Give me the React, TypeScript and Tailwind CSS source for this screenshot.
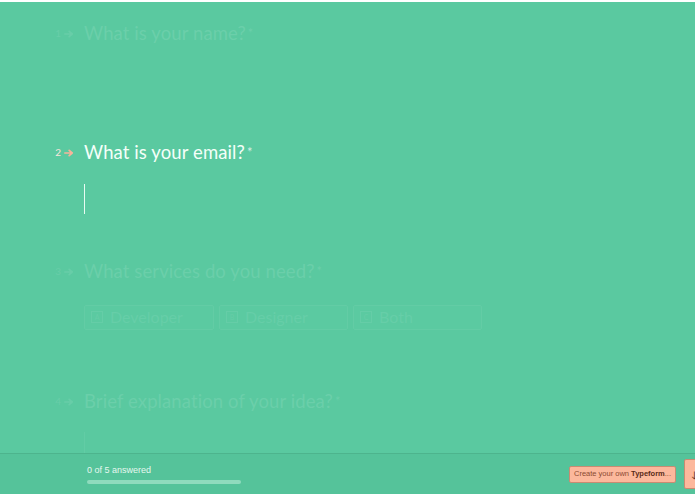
import React from 'react';

const font = { fontFamily: 'Lato, "Noto Sans", sans-serif' };

interface QuestionProps {
  num: number;
  title: string;
  active?: boolean;
  children?: React.ReactNode;
  className?: string;
}

const Question = ({ num, title, active, children, className }: QuestionProps) => (
  <div className={className}>
    <div className="flex items-center">
      <div className="flex items-center w-[84px] justify-end pr-[10px] gap-[3px]">
        <span className={`text-[10px] ${active ? 'text-[#fbe6dc]' : 'text-[#68cda8]'}`}>{num}</span>
        <svg width="10" height="8" viewBox="0 0 10 8" className="mt-[1px]">
          <path
            d="M0.8 4h7M5.2 1.4L8.2 4 5.2 6.6"
            fill="none"
            stroke={active ? '#f8b49a' : '#68cda8'}
            strokeWidth="1.7"
            strokeLinecap="round"
            strokeLinejoin="round"
          />
        </svg>
      </div>
      <h2
        className={`text-[18.5px] tracking-[0.1px] leading-none ${active ? 'text-[#f4fff9]' : 'text-[#6bcfaa]'}`}
      >
        {title}
        <sup className={`text-[13px] ml-[2px] relative top-[-2px] ${active ? 'text-[#d7efe5]' : ''}`}>*</sup>
      </h2>
    </div>
    {children}
  </div>
);

const Choice = ({ letter, label, width }: { letter: string; label: string; width: string }) => (
  <div
    className={`${width} h-[25px] flex items-center gap-[7px] px-[6px] border border-[#63cca5] bg-[#5bcaa1] rounded-[2px]`}
  >
    <span className="w-[12px] h-[12px] border border-[#65cda7] text-[7px] leading-none flex items-center justify-center text-[#66cda7]">
      {letter}
    </span>
    <span className="text-[16px] text-[#66cea8]">{label}</span>
  </div>
);

export default function App() {
  return (
    <div className="w-[695px] h-[494px] overflow-hidden relative bg-[#5ac9a0] border-t-2 border-white" style={font}>
      <div className="flex flex-col pt-[22px]">
        <Question num={1} title="What is your name?" className="h-[119px]" />

        <Question num={2} title="What is your email?" active className="h-[119px]">
          <div className="ml-[84px] mt-[22px] w-[1px] h-[30px] bg-[#e8fbf2]" />
        </Question>

        <Question num={3} title="What services do you need?" className="h-[130px]">
          <div className="ml-[84px] mt-[24px] flex gap-[5px]">
            <Choice letter="A" label="Developer" width="w-[130px]" />
            <Choice letter="B" label="Designer" width="w-[129px]" />
            <Choice letter="C" label="Both" width="w-[129px]" />
          </div>
        </Question>

        <Question num={4} title="Brief explanation of your idea?">
          <div className="ml-[84px] mt-[21px] w-[1px] h-[30px] bg-[#62cca5]" />
        </Question>
      </div>

      {/* barra inferior */}
      <div className="absolute left-0 right-0 bottom-0 h-[41px] bg-[#55c39a] border-t border-[#4db48d] flex items-center justify-between">
        <div className="ml-[87px] flex flex-col gap-[5px] pt-[1px]">
          <span className="text-[9px] leading-none text-[#e6f8ef]" style={{ fontFamily: '"Liberation Sans", Arial, sans-serif' }}>
            0 of 5 answered
          </span>
          <div className="w-[154px] h-[4px] rounded-full bg-[#8fdbbd]" />
        </div>
        <div className="flex items-center gap-[8px] -mr-[14px]">
          <div
            className="h-[17px] px-[4px] flex items-center bg-[#fcb89c] border border-[#c98b72] rounded-[2px] text-[7.5px] text-[#8b4a32]"
            style={{ fontFamily: '"Liberation Sans", Arial, sans-serif' }}
          >
            Create your own&nbsp;<b className="text-[#5a2a18]">Typeform</b>...
          </div>
          <div className="w-[25px] h-[30px] bg-[#fcb89c] border border-[#c98b72] rounded-[2px] flex items-center pl-[6px]">
            <span className="text-[9px] text-[#5a2a18] leading-none">↓</span>
          </div>
        </div>
      </div>
    </div>
  );
}
